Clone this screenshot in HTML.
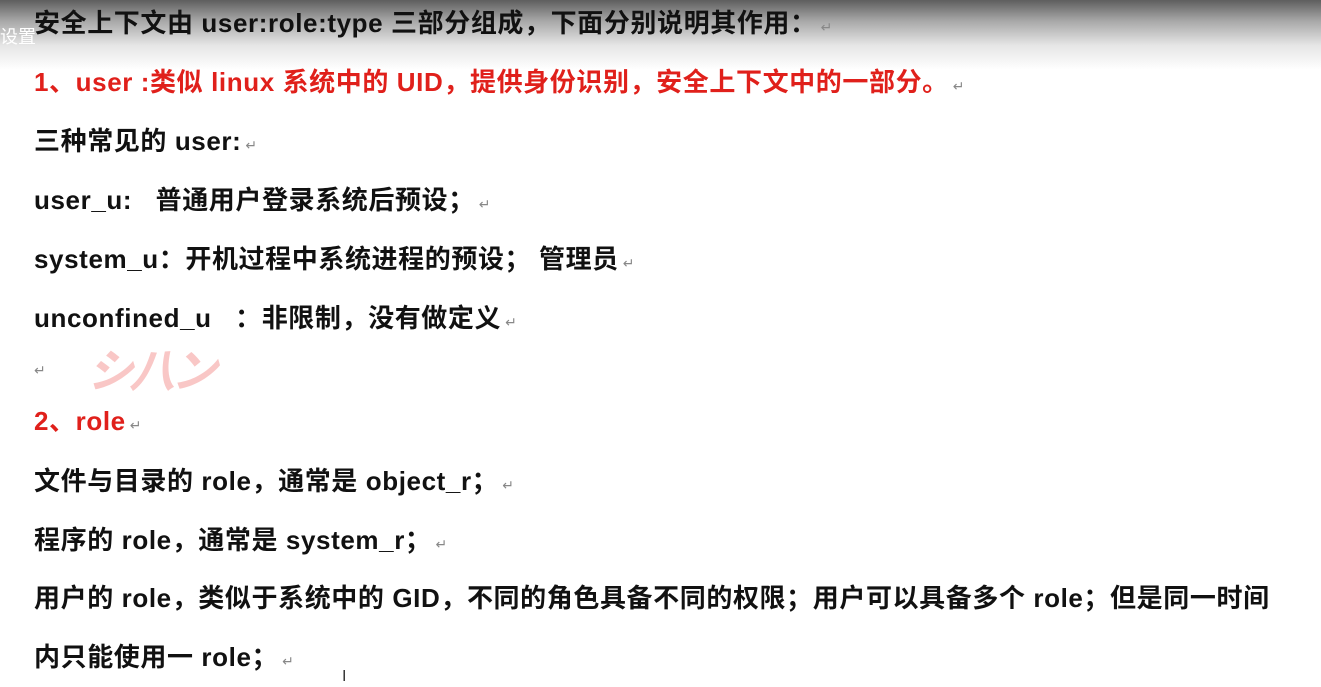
<!DOCTYPE html>
<html><head><meta charset="utf-8"><style>
html,body{margin:0;padding:0;width:1321px;height:687px;overflow:hidden;background:#fff;}
body{position:relative;font-family:"Liberation Sans","Noto Sans CJK SC",sans-serif;font-weight:bold;font-size:26px;letter-spacing:0.6px;color:#111;}
.top{position:absolute;left:0;top:0;width:1321px;height:70px;background:linear-gradient(#5e5e5e 0%,#a8a8a8 30%,#e6e6e6 65%,#fff 100%);}
.l{position:absolute;left:34px;white-space:nowrap;line-height:30px;}
.r{color:#e0201b;}
.m{color:#888;font-size:14px;font-weight:normal;margin-left:4px;}
.set{position:absolute;left:0;top:24px;color:#fff;font-size:18px;font-weight:normal;letter-spacing:0;font-family:"Noto Sans CJK SC",sans-serif;line-height:24px;}
.wm{position:absolute;left:92px;top:335px;color:#f7b0ae;font-size:46px;opacity:.7;letter-spacing:-4px;transform:skewX(-15deg);}
</style></head><body>
<div class="top"></div>
<div class="l" style="top:8px">安全上下文由 user:role:type 三部分组成，下面分别说明其作用：<span class="m">↵</span></div>
<div class="set">设置</div>
<div class="l r" style="top:67px">1、user :类似 linux 系统中的 UID，提供身份识别，安全上下文中的一部分。<span class="m">↵</span></div>
<div class="l" style="top:126px">三种常见的 user:<span class="m">↵</span></div>
<div class="l" style="top:185px">user_u:&nbsp;&nbsp; 普通用户登录系统后预设；<span class="m">↵</span></div>
<div class="l" style="top:244px">system_u：开机过程中系统进程的预设；&nbsp;管理员<span class="m">↵</span></div>
<div class="l" style="top:303px">unconfined_u&nbsp;&nbsp;&nbsp;：非限制，没有做定义<span class="m">↵</span></div>
<div class="wm">シ八ン</div>
<div class="l" style="top:351px"><span class="m" style="margin-left:0">↵</span></div>
<div class="l r" style="top:406px">2、role<span class="m">↵</span></div>
<div class="l" style="top:466px">文件与目录的 role，通常是 object_r；<span class="m">↵</span></div>
<div class="l" style="top:525px">程序的 role，通常是 system_r；<span class="m">↵</span></div>
<div class="l" style="top:583px">用户的 role，类似于系统中的 GID，不同的角色具备不同的权限；用户可以具备多个 role；但是同一时间</div>
<div class="l" style="top:642px">内只能使用一 role；<span class="m">↵</span></div>
<div style="position:absolute;left:342px;top:668px;font-size:16px;font-weight:normal;color:#333;">I</div>
</body></html>
